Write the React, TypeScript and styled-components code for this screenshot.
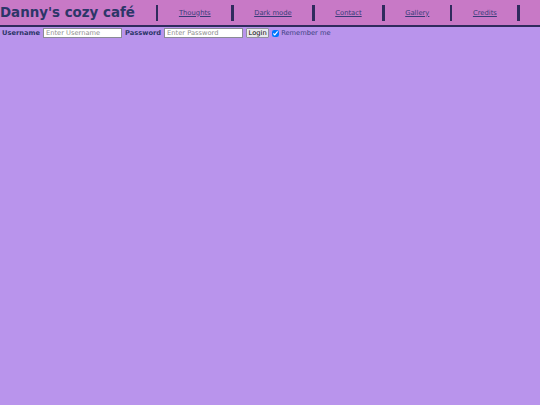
import styled, { createGlobalStyle } from 'styled-components'

const GlobalStyle = createGlobalStyle`
  html, body {
    margin: 0;
    padding: 0;
    background: #b994ec;
    font-family: "DejaVu Sans", Verdana, sans-serif;
    color: #2c3668;
  }
  html, body, #root {
    min-height: 100%;
  }
`

const Header = styled.header`
  display: flex;
  align-items: center;
  height: 25px;
  background: #c879c6;
  border-bottom: 2px solid #2f2b5d;
`

const Title = styled.h1`
  margin: 0 21px 0 0;
  font-size: 13.4px;
  font-weight: bold;
  color: #2c3668;
  white-space: nowrap;
`

const Nav = styled.nav`
  display: flex;
  align-items: center;
`

const Bar = styled.span`
  display: block;
  width: 2.5px;
  height: 16px;
  background: #2f2b5d;
`

const NavLink = styled.a`
  display: block;
  padding: 0 20.5px;
  font-size: 6.8px;
  color: #363c78;
  text-decoration: underline;
  white-space: nowrap;
`

const LoginRow = styled.form`
  display: flex;
  align-items: center;
  gap: 3px;
  padding: 1px 2px;
  font-size: 6.7px;
`

const Label = styled.label`
  font-weight: bold;
`

const Field = styled.input`
  width: 79px;
  height: 10px;
  box-sizing: border-box;
  padding: 0 2px;
  border: 1px solid #8a8a96;
  background: #fff;
  font-family: "DejaVu Sans", sans-serif;
  font-size: 6.7px;
  color: #333;

  &::placeholder {
    color: #8e8e8e;
  }
`

const Button = styled.button`
  height: 10px;
  box-sizing: border-box;
  padding: 0 1.5px;
  border: 1px solid #8f8f9d;
  border-radius: 1px;
  background: #e9e9ed;
  font-family: "DejaVu Sans", sans-serif;
  font-size: 6.7px;
  color: #000;
  line-height: 1;
`

const Check = styled.input`
  width: 7px;
  height: 7px;
  margin: 0 -1px 0 0;
  padding: 0;
`

const CheckText = styled.span`
  color: #3a3f80;
`

const links = ['Thoughts', 'Dark mode', 'Contact', 'Gallery', 'Credits']

export default function App() {
  return (
    <>
      <GlobalStyle />
      <Header>
        <Title>Danny's cozy café</Title>
        <Nav>
          {links.map((l) => (
            <span key={l} style={{ display: 'contents' }}>
              <Bar />
              <NavLink href="#">{l}</NavLink>
            </span>
          ))}
          <Bar />
        </Nav>
      </Header>
      <LoginRow onSubmit={(e) => e.preventDefault()}>
        <Label htmlFor="user">Username</Label>
        <Field id="user" placeholder="Enter Username" />
        <Label htmlFor="pass">Password</Label>
        <Field id="pass" type="password" placeholder="Enter Password" />
        <Button type="submit">Login</Button>
        <Check type="checkbox" defaultChecked />
        <CheckText>Remember me</CheckText>
      </LoginRow>
    </>
  )
}
